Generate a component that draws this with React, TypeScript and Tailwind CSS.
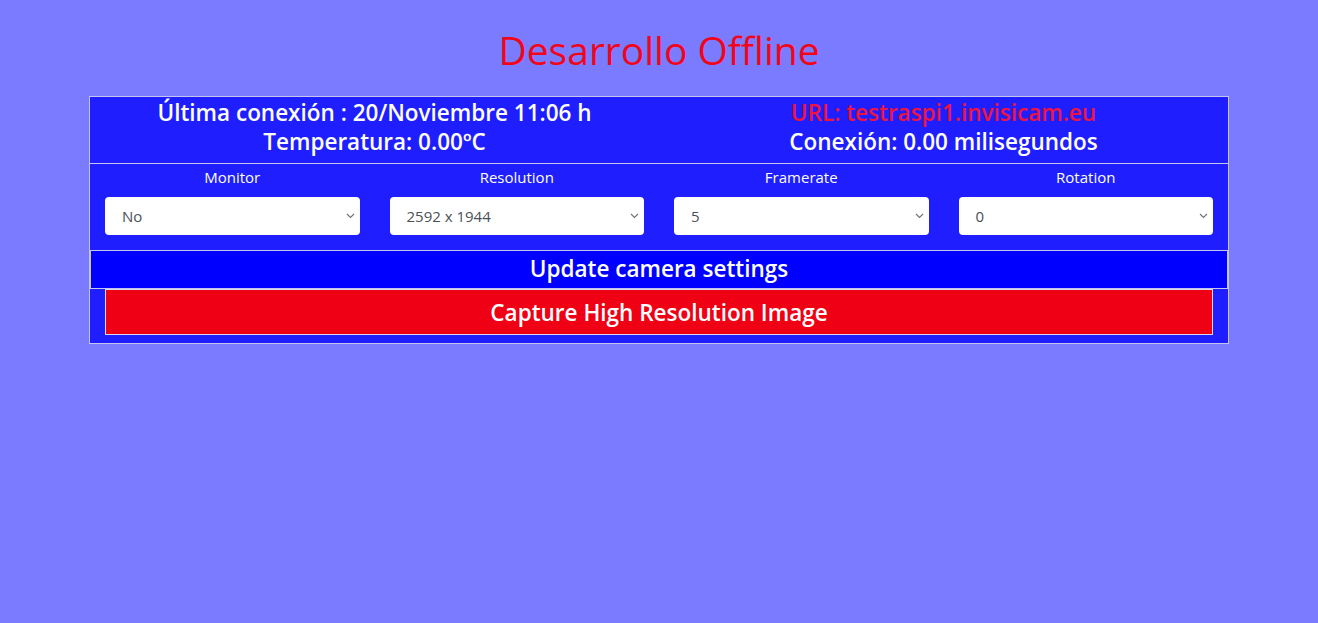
import type { ReactNode } from 'react';

const font = { fontFamily: '"Open Sans", "Noto Sans", sans-serif' };

const Chevron = () => (
    <svg width="9" height="6" viewBox="0 0 9 6" className="absolute right-[5px] top-1/2 -translate-y-1/2" fill="none">
        <path d="M1 1l3.5 3.5L8 1" stroke="#6c757d" strokeWidth="1.2" />
    </svg>
);

interface FieldProps {
    label: string;
    value: string;
    children?: ReactNode;
}

const Field = ({ label, value }: FieldProps) => {
    return (
        <div className="flex flex-col items-stretch px-[15px]">
            <div className="h-[22px] leading-[22px] text-center text-[15px] text-white">{label}</div>
            <div className="relative mt-[9px] h-[38px] rounded-[4px] bg-white">
                <div className="h-full pl-[17px] leading-[38px] text-[15px] text-[#495057]">{value}</div>
                <Chevron />
            </div>
        </div>
    );
};

const App = () => {
    return (
        <div className="min-h-screen w-full bg-[#7b7bff]" style={font}>
            {/* Title */}
            <h1 className="pt-[27px] h-[73px] mb-[23px] text-center text-[39px] leading-[46px] text-[#f20519]">
                Desarrollo Offline
            </h1>

            {/* Panel */}
            <div className="mx-auto w-[1140px] border border-[#c4c4ec] bg-[#1e1eff]">
                {/* Status */}
                <div className="grid h-[67px] grid-cols-2 border-b border-[#c4c4ec] pt-[1px] text-[22.5px] font-semibold leading-[29px] text-white">
                    <div className="text-center">
                        <div>Última conexión : 20/Noviembre 11:06 h</div>
                        <div>Temperatura: 0.00ºC</div>
                    </div>
                    <div className="text-center">
                        <div className="text-[#f0143c]">URL: testraspi1.invisicam.eu</div>
                        <div>Conexión: 0.00 milisegundos</div>
                    </div>
                </div>

                {/* Settings */}
                <div className="grid grid-cols-4 pt-[2px] pb-[15px]">
                    <Field label="Monitor" value="No" />
                    <Field label="Resolution" value="2592 x 1944" />
                    <Field label="Framerate" value="5" />
                    <Field label="Rotation" value="0" />
                </div>

                {/* Actions */}
                <div className="h-[39px] border border-[#c4c4ec] bg-[#0000ff] text-center text-[22.5px] font-semibold leading-[36px] text-white">
                    Update camera settings
                </div>
                <div className="mx-[15px] mb-[8px] h-[46px] border border-[#d8d8f0] bg-[#f00014] text-center text-[22.5px] font-semibold leading-[46px] text-white">
                    Capture High Resolution Image
                </div>
            </div>
        </div>
    );
};

export default App;
